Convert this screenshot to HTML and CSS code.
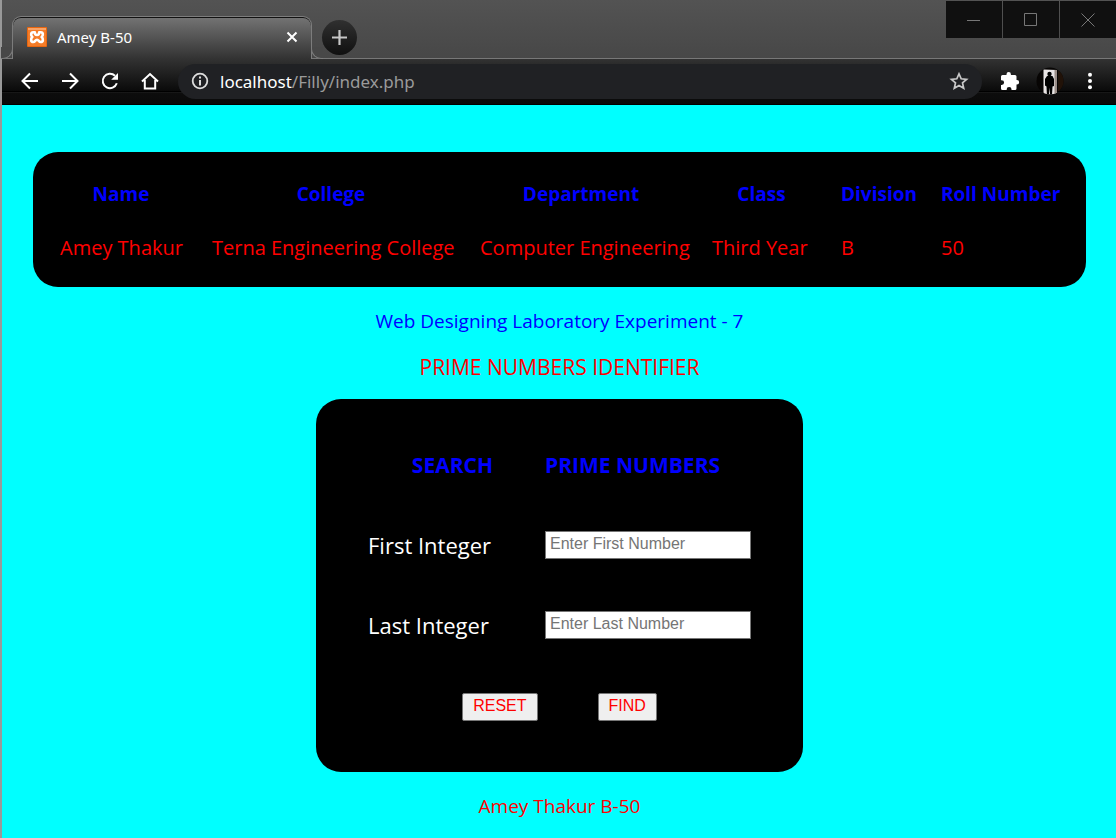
FILE: index.html
```html
<!DOCTYPE html>
<html lang="en">
<head>
<meta charset="utf-8">
<meta name="viewport" content="width=device-width, initial-scale=1">
<title>Amey B-50</title>
<link rel="stylesheet" href="styles.css">
</head>
<body>
<div class="window">
  <header class="chrome">
    <div class="tabstrip">
      <div class="tab">
        <svg class="favicon" viewBox="0 0 20 20" aria-hidden="true">
          <rect width="20" height="20" rx="1" fill="#e8660f"/>
          <rect x="1" y="1" width="18" height="18" fill="#f47c28"/>
          <rect x="1" y="1" width="18" height="2" fill="#f9a366"/>
          <path d="M7.800 5.200H6.200C3.600 5.200 3.600 8.600 5.400 10C3.600 11.400 3.600 15 6.200 15C8.400 15 8 12.800 10 12.800S11.600 15 13.800 15C16.400 15 16.400 11.400 14.600 10C16.400 8.600 16.400 5.200 13.800 5.200H12.200C12.200 7.600 11.400 8 10 8S7.800 7.600 7.800 5.200Z" fill="none" stroke="#fff" stroke-width="2.600" stroke-linejoin="round"/>
        </svg>
        <span class="tab-title">Amey B-50</span>
        <button class="icon-button tab-close" type="button" aria-label="Close tab">
          <svg width="12" height="12" viewBox="0 0 12 12"><path d="M1.500 1.500l9 9M10.500 1.500l-9 9" stroke="#fff" stroke-width="2"/></svg>
        </button>
      </div>
      <button class="icon-button new-tab" type="button" aria-label="New tab">
        <svg width="15" height="15" viewBox="0 0 15 15"><path d="M7.500 0v15M0 7.500h15" stroke="#c8c8c8" stroke-width="2.200"/></svg>
      </button>
      <div class="window-buttons">
        <button type="button" aria-label="Minimize"><svg width="14" height="14" viewBox="0 0 14 14"><path d="M0 7.500h13" stroke="#777"/></svg></button>
        <button type="button" aria-label="Maximize"><svg width="14" height="14" viewBox="0 0 14 14"><path d="M.5 .5h12v12h-12z" fill="none" stroke="#777"/></svg></button>
        <button type="button" aria-label="Close"><svg width="14" height="14" viewBox="0 0 14 14"><path d="M.5 .5l13 13M13.500 .5l-13 13" stroke="#777"/></svg></button>
      </div>
    </div>
    <div class="toolbar">
      <nav class="nav-buttons" aria-label="Navigation">
        <button class="icon-button" type="button" aria-label="Back"><svg width="20" height="20" viewBox="0 0 20 20"><path d="M18 10H3M10 2.500L2.500 10l7.500 7.500" fill="none" stroke="#fff" stroke-width="2"/></svg></button>
        <button class="icon-button" type="button" aria-label="Forward"><svg width="20" height="20" viewBox="0 0 20 20"><path d="M2 10h15M10 2.500l7.500 7.500l-7.500 7.500" fill="none" stroke="#fff" stroke-width="2"/></svg></button>
        <button class="icon-button" type="button" aria-label="Reload"><svg width="20" height="20" viewBox="0 0 20 20"><path d="M16.800 12.300A7.200 7.200 0 1 1 15 4.800" fill="none" stroke="#fff" stroke-width="2"/><path d="M18 2v6.800h-6.800z" fill="#fff"/></svg></button>
        <button class="icon-button" type="button" aria-label="Home"><svg width="20" height="20" viewBox="0 0 20 20"><path d="M2 10.500L10 3l8 7.500M4.800 9v8.500h10.400V9" fill="none" stroke="#fff" stroke-width="2"/></svg></button>
      </nav>
      <div class="address">
        <svg width="18" height="18" viewBox="0 0 18 18" aria-hidden="true"><circle cx="9" cy="9" r="7.300" fill="none" stroke="#ddd" stroke-width="1.800"/><path d="M9 4.500v2M9 8v5.500" stroke="#ddd" stroke-width="2"/></svg>
        <a class="url" href="#"><span class="host">localhost</span>/Filly/index.php</a>
        <button class="icon-button" type="button" aria-label="Bookmark"><svg width="20" height="20" viewBox="0 0 20 20"><path d="M10 2.800l2.200 5 5.400.5-4.100 3.600 1.200 5.300-4.700-2.800-4.700 2.800 1.200-5.300-4.100-3.600 5.400-.5z" fill="none" stroke="#c8c8c8" stroke-width="1.700"/></svg></button>
      </div>
      <div class="actions">
        <button class="icon-button" type="button" aria-label="Extensions"><svg width="20" height="20" viewBox="0 0 20 20"><path d="M1 5.500Q1 4 2.500 4H6.500V3.300a2.200 2.200 0 0 1 4.400 0V4H15q1.500 0 1.500 1.500V9h.4a2.200 2.200 0 0 1 0 4.500h-.4v4q0 1.500-1.500 1.500h-3.500v-.7a2.400 2.400 0 0 0-4.800 0v.7H2.500Q1 19 1 17.500V14h.7a2.400 2.400 0 0 0 0-4.800H1z" fill="#fff"/></svg></button>
        <button class="icon-button" type="button" aria-label="Profile"><svg width="28" height="28" viewBox="0 0 28 28"><defs><clipPath id="round"><circle cx="14" cy="14" r="13.500"/></clipPath></defs><g clip-path="url(#round)"><path d="M0 0h28v28H0z" fill="#070504"/><path d="M22 4h6v20h-6z" fill="#211208"/><path d="M7.500 2.500L21 3v24.500H7.500z" fill="#e8e4e4"/><path d="M18.500 3H21v24h-2.500z" fill="#9a8d88"/><circle cx="13.500" cy="7" r="2.200"/><path d="M11 9h5.500l1.500 3v7l-1.500.5-.5 8h-2l-.5-7-.6 7h-2l-.4-8-1.500-1v-6.500z"/></g></svg></button>
        <button class="icon-button" type="button" aria-label="Menu"><svg width="20" height="20" viewBox="0 0 20 20" fill="#fff"><circle cx="10" cy="3.700" r="2"/><circle cx="10" cy="10" r="2"/><circle cx="10" cy="16.300" r="2"/></svg></button>
      </div>
    </div>
  </header>

  <main class="page">
    <section class="student-card">
      <table class="student">
        <colgroup><col class="c-name"><col class="c-college"><col class="c-department"><col class="c-class"><col class="c-division"><col class="c-roll"></colgroup>
        <thead>
          <tr><th scope="col">Name</th><th scope="col">College</th><th scope="col">Department</th><th scope="col">Class</th><th scope="col">Division</th><th scope="col">Roll Number</th></tr>
        </thead>
        <tbody>
          <tr><td>Amey Thakur</td><td>Terna Engineering College</td><td>Computer Engineering</td><td>Third Year</td><td>B</td><td>50</td></tr>
        </tbody>
      </table>
    </section>
    <h1 class="caption caption-blue">Web Designing Laboratory Experiment - 7</h1>
    <h2 class="caption caption-large">PRIME NUMBERS IDENTIFIER</h2>
    <form class="search-card">
      <div class="fields">
        <strong class="heading heading-end">SEARCH</strong>
        <strong class="heading">PRIME NUMBERS</strong>
        <label for="first">First Integer</label>
        <input id="first" type="text" placeholder="Enter First Number">
        <label for="last">Last Integer</label>
        <input id="last" type="text" placeholder="Enter Last Number">
      </div>
      <div class="form-buttons">
        <button type="reset">RESET</button>
        <button type="button">FIND</button>
      </div>
    </form>
    <footer class="caption">Amey Thakur B-50</footer>
  </main>
</div>
</body>
</html>
```
FILE: styles.css
```css
* {
  box-sizing: border-box;
}

body {
  margin: 0;
  background: #00ffff;
}

.window {
  min-height: 100vh;
  border-left: 2px solid #999;
}

button {
  font: inherit;
}

svg {
  display: block;
}

.icon-button {
  display: flex;
  align-items: center;
  justify-content: center;
  padding: 0;
  border: 0;
  background: none;
}

/* Browser frame */
.chrome {
  font-family: "Segoe UI", "Noto Sans", sans-serif;
}

.tabstrip {
  display: flex;
  height: 59px;
  padding-left: 10px;
  background: linear-gradient(#535353, #474747);
  box-shadow: inset 0 -1px #777;
}

.tab {
  position: relative;
  display: flex;
  align-items: center;
  width: 300px;
  margin-top: 16px;
  padding: 0 13px 2px 14px;
  border: 1px solid #7c7c7c;
  border-bottom: 0;
  border-radius: 9px 9px 0 0;
  background: linear-gradient(#747474, #323232);
  box-shadow: inset 0 1px #111;
}

.tab::before,
.tab::after {
  content: "";
  position: absolute;
  bottom: 0;
  width: 11px;
  height: 11px;
  border-bottom: 1px solid #7c7c7c;
  background: #484848;
}

.tab::before {
  right: 100%;
  border-right: 1px solid #7c7c7c;
  border-bottom-right-radius: 10px;
}

.tab::after {
  left: 100%;
  border-left: 1px solid #7c7c7c;
  border-bottom-left-radius: 10px;
}

.favicon {
  width: 20px;
  height: 20px;
}

.tab-title {
  flex: 1;
  margin-left: 10px;
  color: #fff;
  font-size: 15px;
}

.tab-close {
  width: 12px;
  height: 12px;
}

.new-tab {
  width: 35px;
  height: 35px;
  margin: 20px 0 0 10px;
  border-radius: 50%;
  background: linear-gradient(#303030, #101010);
}

.window-buttons {
  display: flex;
  gap: 1px;
  height: 37px;
  margin: 1px 0 0 auto;
}

.window-buttons button {
  display: flex;
  align-items: center;
  justify-content: center;
  width: 56px;
  padding: 0;
  border: 0;
  background: #101010;
}

.toolbar {
  display: flex;
  align-items: center;
  gap: 18px;
  height: 46px;
  padding: 0 16px 2px 18px;
  background: linear-gradient(#323232, #0a0a0a 32px, #000 32px, #000 33px, #222 33px, #0d0d0d 34px, #0a0a0a 45px, #000 45px);
}

.nav-buttons {
  display: flex;
  gap: 20px;
}

.address {
  display: flex;
  flex: 1;
  align-items: center;
  height: 35px;
  padding: 0 13px;
  border-radius: 18px;
  background: #202124;
}

.url {
  flex: 1;
  margin-left: 11px;
  color: #9a9a9a;
  font-size: 17px;
  text-decoration: none;
}

.host {
  color: #fff;
}

.actions {
  display: flex;
  align-items: center;
  gap: 16px;
}

/* Page content */
.page {
  padding: 47px 30px 16px 31px;
  font-family: "Comic Sans MS", "Open Sans", sans-serif;
  font-size: 20px;
  line-height: 28px;
}

.student-card {
  padding: 15px 12px 12px;
  border-radius: 25px;
  background: #000;
}

.student {
  width: 100%;
  table-layout: fixed;
  border-collapse: collapse;
  white-space: nowrap;
}

.c-name { width: 152px; }
.c-college { width: 268px; }
.c-department { width: 232px; }
.c-class { width: 129px; }
.c-division { width: 100px; }
.c-roll { width: 148px; }

.student th,
.student td {
  padding: 13px 15px;
}

.student th {
  color: #00f;
  font-size: 19px;
  text-align: center;
}

.student td {
  color: #f00;
  text-align: left;
}

.caption {
  margin: 20px 0 0;
  color: #f00;
  font-size: 19px;
  font-weight: 400;
  line-height: 28px;
  text-align: center;
}

.caption-blue {
  color: #00f;
}

.caption-large {
  font-size: 21px;
}

.caption + .caption {
  margin-top: 18px;
}

.search-card {
  width: fit-content;
  margin: 18px auto 0;
  padding: 26px 52px 24px;
  border-radius: 25px;
  background: #000;
}

.fields {
  display: grid;
  grid-template-columns: 125px 206px;
  grid-auto-rows: 80px;
  align-items: center;
  column-gap: 52px;
  color: #fff;
  font-size: 22px;
}

.heading {
  color: #00f;
  font-size: 21px;
}

.heading-end {
  text-align: right;
}

.fields input {
  width: 100%;
  height: 28px;
  padding: 0 4px 2px;
  border: 1px solid #767676;
  font: 16px "Liberation Sans", Arial, sans-serif;
}

.fields input::placeholder {
  color: #757575;
}

.form-buttons {
  display: flex;
  align-items: center;
  justify-content: center;
  gap: 60px;
  height: 83px;
}

.form-buttons button {
  height: 28px;
  padding: 0 10px 1px;
  border: 1px solid #767676;
  border-radius: 2px;
  background: #efefef;
  color: #f00;
  font: 16px "Liberation Sans", Arial, sans-serif;
}
```
